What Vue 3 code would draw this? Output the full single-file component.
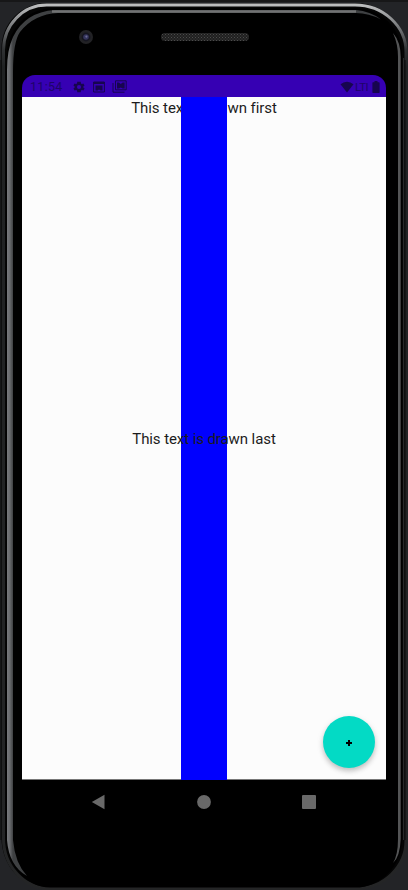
<script setup>
const status = { time: '11:54', network: 'LTI' }
</script>

<template>
  <main class="device">
    <svg class="frame" viewBox="0 0 408 890" aria-hidden="true">
      <defs>
        <linearGradient id="rim" x1="0" y1="0" x2="0" y2="1">
          <stop offset="0" stop-color="#bcbdbe" />
          <stop offset=".02" stop-color="#858789" />
          <stop offset=".05" stop-color="#303234" />
          <stop offset=".07" stop-color="#202223" />
          <stop offset="1" stop-color="#242526" />
        </linearGradient>
        <linearGradient id="edge" x1="7" y1="0" x2="13" y2="0" gradientUnits="userSpaceOnUse">
          <stop offset="0" stop-color="#77797c" />
          <stop offset=".45" stop-color="#6a6c6f" />
          <stop offset="1" stop-color="#3e4042" />
        </linearGradient>
      </defs>
      <rect width="408" height="890" fill="#232427" />
      <rect width="408" height="2" fill="#171718" />
      <path d="M1.500 838V48A45 45 0 0 1 46.500 3H355A51 48 0 0 1 406 51V841A50 48 0 0 1 356 889H50A48 51 0 0 1 1.500 838Z" fill="#050505" />
      <path d="M3.500 838V50A43 45 0 0 1 46.500 5H355A51 47 0 0 1 406 52V840A50 48 0 0 1 356 888.500H50A46 50 0 0 1 3.500 838Z" fill="none" stroke="url(#rim)" stroke-width="3" />
      <path d="M6.500 838V58A47 49 0 0 1 53.500 8H354A48 46 0 0 1 402 54V840A47 48 0 0 1 355 887.500H50A44 49 0 0 1 6.500 838Z" fill="#000" />
      <path d="M7 840V70Q7 50 13 37Q25 12 55 10H356Q370 11 381 19.500Q369 13 356 13H58Q34 14 20 32Q13 42 13 72V840Q15 863 27 876Q9 866 7 840Z" fill="url(#edge)" />
      <path d="M52 11.500H356" stroke="#717273" stroke-width="2.600" />
      <path d="M393 33Q400.700 42 400.700 57V839Q400 857 393 863Q398 855 398 839V57Q398 44 393 33Z" fill="#545556" />
      <path d="M403.500 58V840" stroke="#28292a" />
      <path d="M405 60V840M1 60V840" stroke="#0b0b0b" />
    </svg>

    <header class="bezel">
      <svg class="camera" viewBox="0 0 16 16">
        <circle cx="8" cy="8" r="7" fill="#222225" />
        <circle cx="8" cy="8" r="4.400" fill="#151520" />
        <circle cx="8" cy="8" r="2.800" fill="#34345c" />
        <circle cx="8.400" cy="7.600" r="1.100" fill="#6b6b91" />
      </svg>
      <div class="speaker"></div>
    </header>

    <section class="screen">
      <div class="status">
        <span class="time">{{ status.time }}</span>
        <svg class="gear" viewBox="0 0 24 24"><path fill-rule="evenodd" d="m19.4 13 .1-1-.1-1 2.1-1.700-2-3.500-2.500 1a8 8 0 0 0-1.700-1L15 3h-6l-.4 2.800a8 8 0 0 0-1.700 1l-2.500-1-2 3.500L4.600 11l-.1 1 .1 1-2.100 1.700 2 3.500 2.500-1a8 8 0 0 0 1.700 1L9 21h6l.4-2.800a8 8 0 0 0 1.700-1l2.500 1 2-3.500ZM12 15.500a3.500 3.500 0 1 1 0-7 3.500 3.500 0 0 1 0 7Z" /></svg>
        <svg class="picture" viewBox="0 0 12 12"><path d="M.6 1h10.800v10H.6z" fill="none" stroke="currentColor" stroke-width="1" /><path d="M.6 1h10.800v2H.6zM2.500 4.500h7v5h-2l-1.500-1-1.500 1h-2z" /></svg>
        <svg class="gallery" viewBox="0 0 15 13"><path d="M3.500.8h10.700v9H3.500zM1 3v9.200h11.500" fill="none" stroke="currentColor" stroke-width="1" /><path d="M5 2.500h2l1.800 1.500 1.800-1.500h2v6h-2l-1.800-1L7 8.500H5z" /></svg>
        <span class="spacer"></span>
        <svg class="wifi" viewBox="0 0 14 12"><path d="M.5 3.300Q3.300.8 7 .8t6.500 2.500L7 11.500Z" /></svg>
        <span class="network">{{ status.network }}</span>
        <svg class="battery" viewBox="0 0 8 12"><path d="M2.500 0h3v1.300H7q.6 0 .6.700v9.300q0 .7-.6.700H1q-.6 0-.6-.7V2q0-.7.6-.7h1.500Z" /></svg>
      </div>
      <div class="content">
        <p class="label first">This text is drawn first</p>
        <div class="strip"></div>
        <p class="label last">This text is drawn last</p>
        <button class="fab" aria-label="Add"><svg viewBox="0 0 6 6"><path d="M3 0v6M0 3h6" stroke="#000" stroke-width="2" /></svg></button>
      </div>
    </section>

    <nav class="navigation">
      <svg viewBox="0 0 14 16"><path d="M.8 8 13.500.8v14.400Z" /></svg>
      <svg viewBox="0 0 14 16"><circle cx="7" cy="8" r="6.900" /></svg>
      <svg viewBox="0 0 14 16"><rect y="1" width="14" height="14" rx="1" /></svg>
    </nav>
  </main>
</template>

<style>
body { margin: 0; background: #232427; }
</style>

<style scoped>
* { box-sizing: border-box; }
.device { position: relative; width: 408px; height: 890px; overflow: hidden; font-family: Roboto, sans-serif; }
.frame { position: absolute; inset: 0; width: 408px; height: 890px; }
.bezel { position: relative; height: 75px; display: flex; padding: 29px 0 0 78px; }
.camera { width: 16px; height: 16px; }
.speaker { width: 88px; height: 8px; margin: 4px 0 0 67px; border-radius: 4px; background-color: #202020; background-image: radial-gradient(#4b4b4b 30%, transparent 35%), radial-gradient(#404040 30%, transparent 35%); background-size: 3px 3px; background-position: 0 0, 1.5px 1.5px; }
.screen { position: relative; width: 364px; margin-left: 22px; border-radius: 13px 13px 0 0; overflow: hidden; }
.status { height: 22px; display: flex; align-items: center; padding: 1px 6px 0 8px; background: #3600b3; color: #17054f; }
.status svg { flex: none; fill: currentColor; }
.time { width: 33px; font-size: 12.5px; line-height: 20px; letter-spacing: .3px; color: #1e0468; }
.gear { width: 14px; height: 14px; margin-left: 9px; }
.picture { width: 12px; height: 12px; margin-left: 7px; }
.gallery { width: 15px; height: 13px; margin-left: 7px; }
.spacer { flex: 1; }
.wifi { width: 14px; height: 12px; }
.network { width: 15px; padding-left: 1px; font-size: 11.5px; line-height: 20px; letter-spacing: -.5px; color: #1e0468; }
.battery { width: 8px; height: 12px; margin-left: 3px; }
.content { position: relative; height: 683px; background: #fcfcfc; border-bottom: 1px solid #777; }
.label { position: absolute; left: 0; width: 100%; margin: 0; text-align: center; font-size: 15px; line-height: 20px; letter-spacing: -.09px; color: #1c1c1c; }
.first { top: 1px; }
.last { top: 332px; }
.strip { position: relative; width: 46px; height: 683px; margin: 0 auto; background: #00f; }
.fab { position: absolute; right: 11px; bottom: 11px; width: 52px; height: 52px; border: 0; border-radius: 50%; padding: 2px 0 0; display: grid; place-items: center; background: #03dac5; box-shadow: 0 3px 5px #0003, 0 2px 8px #0001; }
.fab svg { width: 6px; height: 6px; }
.navigation { position: relative; display: flex; gap: 91.5px; padding: 14px 0 0 91px; }
.navigation svg { width: 14px; height: 16px; fill: #696969; }
</style>
